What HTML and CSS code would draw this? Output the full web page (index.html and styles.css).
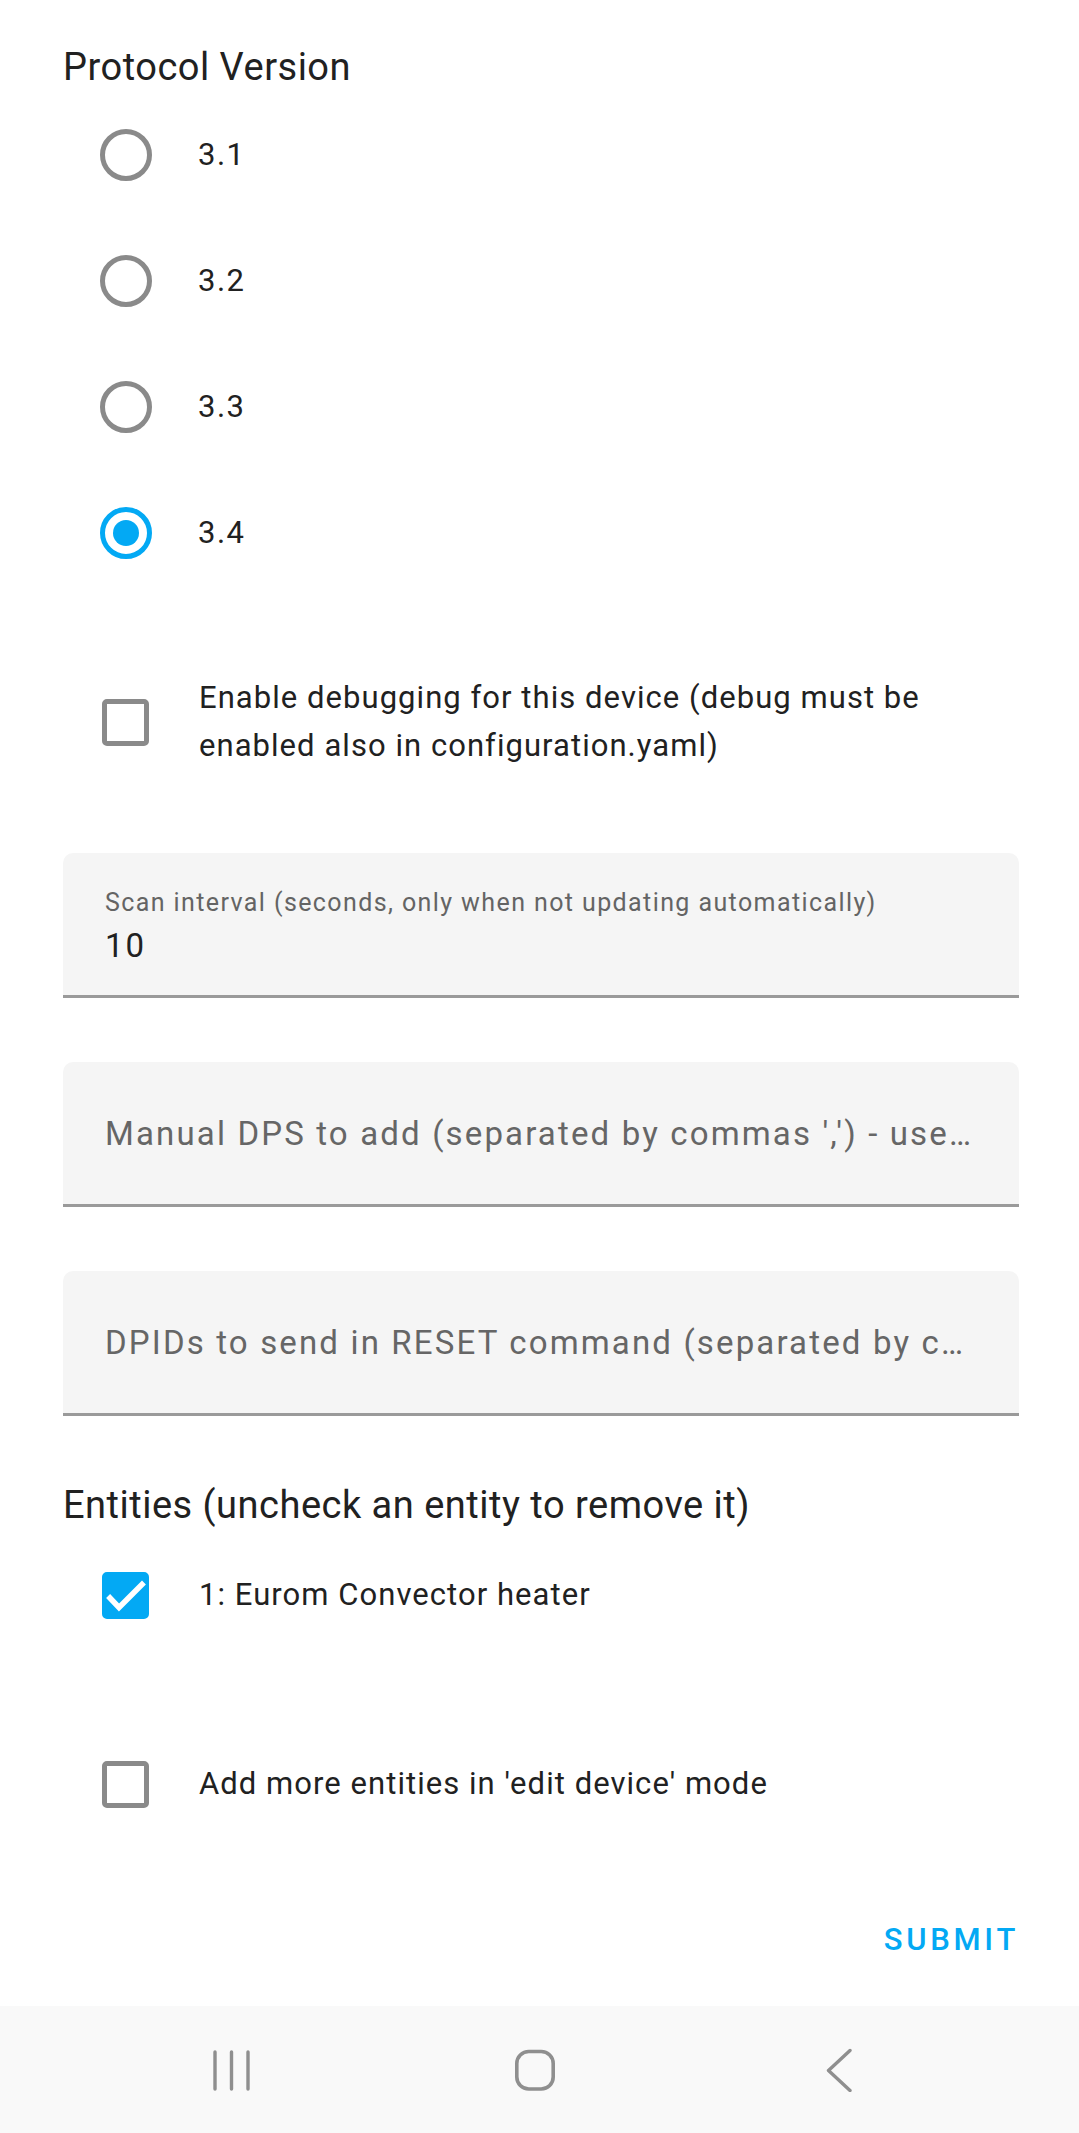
FILE: index.html
```html
<!DOCTYPE html>
<html lang="en">
<head>
<meta charset="utf-8">
<title>Device options</title>
<link rel="stylesheet" href="styles.css">
</head>
<body>
<main class="page">
  <div class="content">
    <h2 class="heading">Protocol Version</h2>
    <div class="radio-group">
      <label class="option"><span class="radio"></span><span class="option-label">3.1</span></label>
      <label class="option"><span class="radio"></span><span class="option-label">3.2</span></label>
      <label class="option"><span class="radio"></span><span class="option-label">3.3</span></label>
      <label class="option"><span class="radio radio-checked"><span class="radio-dot"></span></span><span class="option-label">3.4</span></label>
    </div>

    <label class="check-row check-row-gap"><span class="checkbox"></span><span class="check-label">Enable debugging for this device (debug must be enabled also in configuration.yaml)</span></label>

    <div class="field field-filled field-first">
      <span class="field-label">Scan interval (seconds, only when not updating automatically)</span>
      <span class="field-value">10</span>
    </div>
    <div class="field field-empty">
      <span class="placeholder">Manual DPS to add (separated by commas ',') - used when detection fails</span>
    </div>
    <div class="field field-empty">
      <span class="placeholder">DPIDs to send in RESET command (separated by commas ',')</span>
    </div>

    <h2 class="heading heading-entities">Entities (uncheck an entity to remove it)</h2>
    <label class="check-row check-row-first"><span class="checkbox checkbox-checked"><svg class="check-mark" viewBox="0 0 47 47" width="47" height="47"><polyline points="8,26 17,35.5 40,12.5" fill="none" stroke="#ffffff" stroke-width="5.5" stroke-linecap="square" stroke-linejoin="miter"/></svg></span><span class="check-label">1: Eurom Convector heater</span></label>
    <label class="check-row check-row-gap"><span class="checkbox"></span><span class="check-label">Add more entities in 'edit device' mode</span></label>

    <div class="actions"><button class="submit" type="button">SUBMIT</button></div>
  </div>

  <nav class="navbar">
    <span class="nav-icon nav-recents">
      <svg viewBox="0 0 40 44" width="40" height="44"><g stroke="#8f8f8f" stroke-width="3.4" stroke-linecap="round"><line x1="4" y1="4" x2="4" y2="41"/><line x1="20.5" y1="4" x2="20.5" y2="41"/><line x1="37" y1="4" x2="37" y2="41"/></g></svg>
    </span>
    <span class="nav-icon nav-home">
      <svg viewBox="0 0 44 44" width="44" height="44"><rect x="3.8" y="3.5" width="36.4" height="37.5" rx="12" ry="12" fill="none" stroke="#8f8f8f" stroke-width="3.6"/></svg>
    </span>
    <span class="nav-icon nav-back">
      <svg viewBox="0 0 30 44" width="30" height="44"><polyline points="26,2.5 4.5,22.5 26,42.5" fill="none" stroke="#8f8f8f" stroke-width="3.4" stroke-linecap="round" stroke-linejoin="round"/></svg>
    </span>
  </nav>
</main>
</body>
</html>
```

FILE: styles.css
```css
html, body {
  margin: 0;
  padding: 0;
  background: #ffffff;
}

body {
  font-family: Roboto, "Liberation Sans", sans-serif;
  color: #212121;
}

.page {
  display: flex;
  flex-direction: column;
  min-height: 100vh;
}

.content {
  padding: 42px 60px 0 63px;
  display: flex;
  flex-direction: column;
}

.heading {
  margin: 0;
  font-size: 38px;
  font-weight: 400;
  line-height: 50px;
  letter-spacing: 0.5px;
  color: #212121;
}

.heading-entities {
  margin-top: 64px;
}

.radio-group {
  display: flex;
  flex-direction: column;
}

.option {
  display: flex;
  align-items: center;
  height: 126px;
}

.radio {
  box-sizing: border-box;
  flex: 0 0 auto;
  width: 52px;
  height: 52px;
  border: 5px solid #8a8a8a;
  border-radius: 50%;
  margin-left: 37px;
  margin-right: 46px;
  display: flex;
  align-items: center;
  justify-content: center;
}

.radio-checked {
  border-color: #03a9f4;
}

.radio-dot {
  width: 26px;
  height: 26px;
  border-radius: 50%;
  background: #03a9f4;
}

.option-label {
  font-size: 31px;
  line-height: 48px;
  letter-spacing: 1.5px;
}

.check-row {
  display: flex;
  align-items: center;
  min-height: 126px;
}

.check-row-gap {
  margin-top: 63px;
}

.check-row-first {
  margin-top: 2px;
}

.checkbox {
  box-sizing: border-box;
  flex: 0 0 auto;
  width: 47px;
  height: 47px;
  border: 5px solid #8a8a8a;
  border-radius: 5px;
  margin-left: 39px;
  margin-right: 50px;
  position: relative;
}

.checkbox-checked {
  border-color: #03a9f4;
  background: #03a9f4;
}

.check-mark {
  position: absolute;
  left: -5px;
  top: -5px;
}

.check-label {
  font-size: 31px;
  line-height: 48px;
  letter-spacing: 1.05px;
}

.field {
  box-sizing: border-box;
  height: 145px;
  background: #f5f5f5;
  border-radius: 10px 10px 0 0;
  border-bottom: 3px solid #9a9a9a;
  padding: 0 42px;
  margin-top: 64px;
}

.field-first {
  margin-top: 68px;
}

.field-filled {
  display: flex;
  flex-direction: column;
  padding-top: 33px;
}

.field-label {
  font-size: 25px;
  line-height: 34px;
  letter-spacing: 1.4px;
  color: #646464;
  white-space: nowrap;
}

.field-value {
  font-size: 33px;
  line-height: 51px;
  letter-spacing: 1.9px;
  color: #212121;
}

.field-empty {
  display: flex;
  align-items: center;
}

.placeholder {
  font-size: 33px;
  line-height: 48px;
  letter-spacing: 2.15px;
  color: #666666;
  white-space: nowrap;
  overflow: hidden;
  text-overflow: ellipsis;
  min-width: 0;
  margin-top: 2px;
}

.actions {
  display: flex;
  justify-content: flex-end;
  margin-top: 69px;
}

.submit {
  font-family: Roboto, "Liberation Sans", sans-serif;
  font-size: 31px;
  font-weight: 500;
  letter-spacing: 3.7px;
  line-height: 48px;
  color: #03a9f4;
  background: transparent;
  border: none;
  padding: 0;
  margin: 0;
}

.navbar {
  margin-top: auto;
  height: 127px;
  background: #f9f9f9;
  display: flex;
  align-items: center;
  justify-content: center;
  gap: 260px;
  padding-right: 9px;
}

.nav-icon {
  display: flex;
  align-items: center;
  justify-content: center;
  width: 44px;
  height: 44px;
}
```
